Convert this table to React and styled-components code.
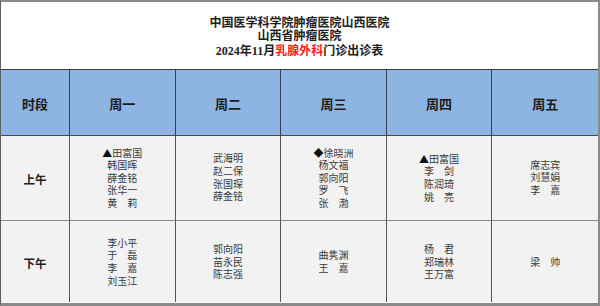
import React from 'react';
import styled, { createGlobalStyle } from 'styled-components';

const GlobalStyle = createGlobalStyle`
  html, body {
    margin: 0;
    padding: 0;
    background: #fff;
  }
`;

const Frame = styled.div`
  box-sizing: border-box;
  width: 600px;
  height: 306px;
  border-top: 2px solid #8a8a8a;
  border-left: 1px solid #5e5e5e;
  border-right: 2px solid #8a8a8a;
  border-bottom: 3px solid #8a8a8a;
  padding-bottom: 1px;
  display: flex;
  flex-direction: column;
  background: #fff;
  font-family: "Liberation Serif", "Noto Sans CJK SC", serif;
`;

const TitleBlock = styled.header`
  height: 67px;
  display: flex;
  flex-direction: column;
  align-items: center;
  padding-top: 15px;
  box-sizing: border-box;
  color: #1e1e1e;
  font-weight: bold;
  font-size: 12px;
`;

const TitleLine = styled.div`
  line-height: 13px;
  margin-top: ${props => props.gap || 0}px;
`;

const Red = styled.span`
  color: #ff1a1a;
`;

const Table = styled.div`
  display: grid;
  grid-template-columns: 69px repeat(5, 1fr);
  grid-template-rows: 66px 85px 81px;
  border-top: 1px solid #3c3c3c;
`;

const HeadCell = styled.div`
  box-sizing: border-box;
  background: #8db4e2;
  border-right: ${props => (props.last ? 'none' : '1px solid #34404e')};
  border-bottom: 1px solid #4a4a4a;
  display: flex;
  align-items: center;
  justify-content: center;
  font-family: "Liberation Serif", "Noto Sans CJK SC", serif;
  font-weight: bold;
  font-size: 13px;
  color: #1c1c1c;
  padding-top: 1px;
`;

const BodyCell = styled.div`
  box-sizing: border-box;
  background: #f2f2f2;
  border-right: ${props => (props.last ? 'none' : '1px solid #555')};
  border-bottom: ${props => (props.bottom ? 'none' : '1px solid #8c8c8c')};
  display: flex;
  flex-direction: column;
  align-items: center;
  justify-content: center;
  padding-top: ${props => props.shift || 0}px;
`;

const PeriodLabel = styled.div`
  font-family: "Liberation Serif", "Noto Sans CJK SC", serif;
  font-weight: bold;
  font-size: 11.5px;
  color: #222;
`;

const Name = styled.div`
  font-family: "Liberation Serif", "Noto Sans CJK SC", serif;
  font-size: 10px;
  line-height: 12.6px;
  color: #3a3a3a;
  white-space: pre;
  text-align: center;
`;

// ▲ / ◆ markers, full width like the CJK glyphs
const Mark = styled.span`
  font-family: "Noto Sans CJK SC", sans-serif;
  font-size: 10px;
  line-height: 12.6px;
  color: #111;
`;

const days = ['周一', '周二', '周三', '周四', '周五'];

const schedule = [
  {
    period: '上午',
    cells: [
      ['▲田富国', '韩国晖', '薛金铭', '张华一', '黄　莉'],
      ['武海明', '赵二保', '张国琛', '薛金铭'],
      ['◆徐晓洲', '杨文福', '郭向阳', '罗　飞', '张　渤'],
      ['▲田富国', '李　剑', '陈润琦', '姚　亮'],
      ['席志宾', '刘慧娟', '李　嘉'],
    ],
  },
  {
    period: '下午',
    cells: [
      ['李小平', '于　磊', '李　嘉', '刘玉江'],
      ['郭向阳', '苗永民', '陈志强'],
      ['曲隽渊', '王　嘉'],
      ['杨　君', '郑瑞林', '王万富'],
      ['梁　帅'],
    ],
  },
];

const renderName = n => {
  const first = n[0];
  if (first === '▲' || first === '◆') {
    return (
      <>
        <Mark>{first}</Mark>
        {n.slice(1)}
      </>
    );
  }
  return n;
};

const App = () => {
  return (
    <>
      <GlobalStyle />
      <Frame>
        <TitleBlock>
          <TitleLine>中国医学科学院肿瘤医院山西医院</TitleLine>
          <TitleLine>山西省肿瘤医院</TitleLine>
          <TitleLine gap={2}>
            2024年11月<Red>乳腺外科</Red>门诊出诊表
          </TitleLine>
        </TitleBlock>
        <Table>
          <HeadCell>时段</HeadCell>
          {days.map((d, i) => (
            <HeadCell key={d} last={i === days.length - 1}>{d}</HeadCell>
          ))}
          {schedule.map((row, r) => (
            <React.Fragment key={row.period}>
              <BodyCell bottom={r === schedule.length - 1} shift={r === 1 ? 3 : 1}>
                <PeriodLabel>{row.period}</PeriodLabel>
              </BodyCell>
              {row.cells.map((names, c) => (
                <BodyCell
                  key={c}
                  last={c === row.cells.length - 1}
                  bottom={r === schedule.length - 1}
                  shift={r === 1 ? 3 : 1}
                >
                  {names.map((n, k) => (
                    <Name key={k}>{renderName(n)}</Name>
                  ))}
                </BodyCell>
              ))}
            </React.Fragment>
          ))}
        </Table>
      </Frame>
    </>
  );
};

export default App;
